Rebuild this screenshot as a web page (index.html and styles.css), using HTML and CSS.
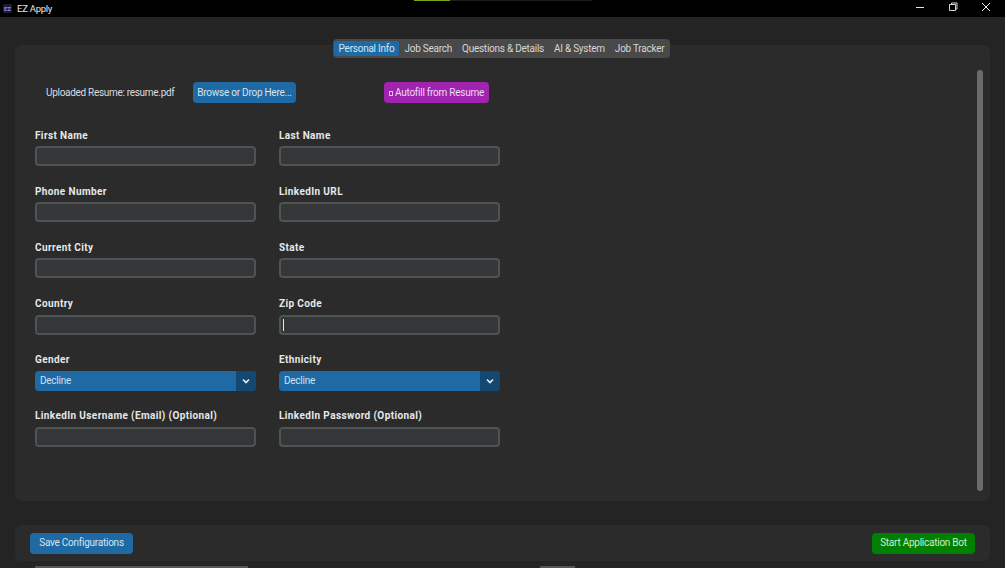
FILE: index.html
```html
<!DOCTYPE html>
<html lang="en">
<head>
    <meta charset="UTF-8">
    <meta name="viewport" content="width=device-width, initial-scale=1.0">
    <title>EZ Apply</title>
    <link rel="stylesheet" href="styles.css">
</head>
<body>
    <div class="titlebar">
        <div class="app-logo">EZ</div>
        <div class="app-title">EZ Apply</div>
        <div class="top-progress"><div class="top-progress-fill"></div></div>
        <div class="window-btns">
            <svg width="10" height="10" viewBox="0 0 10 10"><path d="M1 5.5h8" stroke="#e6e6e6" stroke-width="1" fill="none"/></svg>
            <svg width="10" height="10" viewBox="0 0 10 10"><path d="M1.5 2.5h6v6h-6z M3.5 2.5v-1.5h5.5v6h-1.5" stroke="#d8d8d8" stroke-width="1" fill="none"/></svg>
            <svg width="10" height="10" viewBox="0 0 10 10"><path d="M1 1l8 8M9 1l-8 8" stroke="#f0f0f0" stroke-width="1" fill="none"/></svg>
        </div>
    </div>

    <div class="tabs-row">
        <div class="tabs">
            <div class="tab active">Personal Info</div>
            <div class="tab">Job Search</div>
            <div class="tab">Questions &amp; Details</div>
            <div class="tab">AI &amp; System</div>
            <div class="tab">Job Tracker</div>
        </div>
    </div>

    <div class="panel">
        <div class="panel-content">
            <div class="resume-row">
                <span class="resume-label">Uploaded Resume: resume.pdf</span>
                <button class="btn btn-blue browse-btn">Browse or Drop Here...</button>
                <button class="btn btn-purple autofill-btn"><span class="tofu"></span>Autofill from Resume</button>
            </div>
            <div class="form-grid">
                <div class="form-group"><label>First Name</label><input type="text"></div>
                <div class="form-group"><label>Last Name</label><input type="text"></div>
                <div class="form-group"><label>Phone Number</label><input type="text"></div>
                <div class="form-group"><label>LinkedIn URL</label><input type="text"></div>
                <div class="form-group"><label>Current City</label><input type="text"></div>
                <div class="form-group"><label>State</label><input type="text"></div>
                <div class="form-group"><label>Country</label><input type="text"></div>
                <div class="form-group">
                    <label>Zip Code</label>
                    <div class="input-wrap"><input type="text"><span class="caret"></span></div>
                </div>
                <div class="form-group">
                    <label>Gender</label>
                    <div class="select"><span class="select-value">Decline</span><span class="select-arrow"><svg width="8" height="6" viewBox="0 0 8 6"><path d="M1 1.5l3 3 3-3" stroke="#e8eef4" stroke-width="1.6" fill="none"/></svg></span></div>
                </div>
                <div class="form-group">
                    <label>Ethnicity</label>
                    <div class="select"><span class="select-value">Decline</span><span class="select-arrow"><svg width="8" height="6" viewBox="0 0 8 6"><path d="M1 1.5l3 3 3-3" stroke="#e8eef4" stroke-width="1.6" fill="none"/></svg></span></div>
                </div>
                <div class="form-group"><label>LinkedIn Username (Email) (Optional)</label><input type="text"></div>
                <div class="form-group"><label>LinkedIn Password (Optional)</label><input type="password"></div>
            </div>
        </div>
        <div class="scrollbar"></div>
    </div>

    <div class="footer">
        <button class="btn btn-blue save-btn">Save Configurations</button>
        <button class="btn btn-green start-btn">Start Application Bot</button>
    </div>

    <div class="bottom-strip">
        <div class="strip-long"></div>
        <div class="strip-short"></div>
    </div>
</body>
</html>
```

FILE: styles.css
```css
html, body {
    height: 100%;
}

body {
    margin: 0;
    height: 568px;
    overflow: hidden;
    background-color: #242424;
    font-family: Roboto, "Liberation Sans", sans-serif;
    font-size: 10px;
    letter-spacing: -0.25px;
    color: #dce4e8;
}

.titlebar {
    height: 17px;
    background: #000;
    display: flex;
    align-items: center;
    position: relative;
}
.app-logo {
    width: 9px;
    height: 9px;
    margin-left: 3px;
    background: #1d1a33;
    color: #8f86e0;
    font-size: 6px;
    font-weight: 700;
    line-height: 9px;
    letter-spacing: 0;
    text-align: center;
}
.app-title {
    margin-left: 5px;
    font-size: 9.5px;
    color: #e8e8e8;
}
.top-progress {
    position: absolute;
    left: 414px;
    top: 0;
    width: 178px;
    height: 1px;
    background: #1c1c1c;
}
.top-progress-fill {
    width: 36px;
    height: 1px;
    background: #76a81c;
}
.window-btns {
    margin-left: auto;
    display: flex;
    gap: 23px;
    padding-right: 14px;
    margin-top: -3px;
}
.window-btns svg {
    width: 10px;
    height: 10px;
    display: block;
}

.tabs-row {
    display: flex;
    justify-content: center;
    margin-top: 22px;
    margin-bottom: -13px;
    padding-right: 2px;
    position: relative;
}
.tabs {
    height: 19px;
    background: #494949;
    border-radius: 4px;
    display: flex;
    align-items: center;
    padding: 0 1px 0 1px;
}
.tab {
    height: 15px;
    line-height: 15px;
    padding: 0 5px;
    border-radius: 2px;
    white-space: nowrap;
    color: #d6d6d6;
}
.tab.active {
    background: #1f6aa5;
    color: #d4e6f4;
}

.panel {
    margin: 0 15px;
    height: 456px;
    box-sizing: border-box;
    background: #2b2b2b;
    border-radius: 6px;
    display: flex;
}
.panel-content {
    flex: 1;
    padding: 37px 0 0 20px;
}
.scrollbar {
    width: 6px;
    height: 421px;
    margin: 25px 7px 0 0;
    background: #6b6b6b;
    border-radius: 3px;
}

.resume-row {
    display: flex;
    align-items: center;
    height: 21px;
}
.resume-label {
    margin-left: 11px;
    width: 147px;
    white-space: nowrap;
    letter-spacing: -0.3px;
    color: #d8dde0;
}
.btn {
    border: none;
    border-radius: 4px;
    height: 21px;
    padding: 0 0 1px;
    font-family: inherit;
    font-size: 10px;
    letter-spacing: -0.25px;
    white-space: nowrap;
    color: #d6e4ee;
    cursor: pointer;
    display: flex;
    align-items: center;
    justify-content: center;
}
.btn-blue {
    background: #1f6aa5;
}
.btn-purple {
    background: #a024b0;
    color: #f0dcf2;
}
.btn-green {
    background: #008000;
    color: #cfeccf;
}
.browse-btn {
    width: 103px;
}
.autofill-btn {
    width: 105px;
    margin-left: 88px;
}
.tofu {
    width: 2px;
    height: 3px;
    margin: 2px 2px 0 0;
    border: 1px solid #e4c4e8;
}

.form-grid {
    display: grid;
    grid-template-columns: 221px 221px;
    column-gap: 23px;
    row-gap: 18.56px;
    margin-top: 25.5px;
}
.form-group label {
    display: block;
    height: 17.6px;
    line-height: 13px;
    font-size: 10px;
    font-weight: 700;
    letter-spacing: 0.38px;
    white-space: nowrap;
    color: #e6e8ea;
}
.form-group input {
    display: block;
    width: 100%;
    height: 20px;
    box-sizing: border-box;
    background: #343638;
    border: 2px solid #4e5356;
    border-radius: 4px;
    outline: none;
    color: #dce4ee;
}
.input-wrap {
    position: relative;
}
.caret {
    position: absolute;
    left: 4px;
    top: 4px;
    width: 1px;
    height: 12px;
    background: #e8e8e8;
}

.select {
    height: 20px;
    display: flex;
    background: #1f6aa5;
    border-radius: 4px;
    overflow: hidden;
}
.select-value {
    flex: 1;
    padding-left: 5px;
    line-height: 20px;
    color: #cfe0ee;
}
.select-arrow {
    width: 20px;
    background: #144870;
    display: flex;
    align-items: center;
    justify-content: center;
}

.footer {
    margin: 24px 15px 0;
    height: 36px;
    background: #2b2b2b;
    border-radius: 6px;
    display: flex;
    align-items: center;
    justify-content: space-between;
    padding: 0 15px;
}
.save-btn {
    width: 103px;
}
.start-btn {
    width: 103px;
}

.bottom-strip {
    display: flex;
    margin-top: 5px;
    padding-left: 35px;
}
.strip-long {
    width: 213px;
    height: 2px;
    background: #565656;
}
.strip-short {
    width: 35px;
    height: 2px;
    margin-left: 292px;
    background: #565656;
}
```
